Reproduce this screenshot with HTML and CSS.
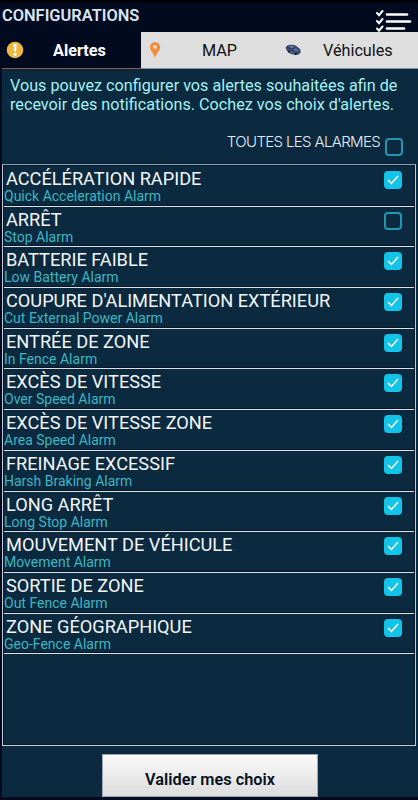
FILE: index.html
```
<!DOCTYPE html>
<html lang="fr">
<head>
    <meta charset="UTF-8">
    <meta name="viewport" content="width=device-width, initial-scale=1.0">
    <title>Configurations</title>
    <link rel="stylesheet" href="styles.css">
</head>
<body>
    <header class="topbar">
        <h1>CONFIGURATIONS</h1>
        <svg class="menu-icon" width="38" height="24" viewBox="0 0 38 24" fill="none" stroke="#fff" stroke-linecap="round">
            <path d="M12 6.5h20M12 13.5h23M12 20.5h17" stroke-width="2.7"/>
            <path d="M2 5l2 2.2 3.5-4.2M2 13l2 2.2 3.5-4.2M2 20.5l2 2.2 3.5-4.2" stroke-width="2"/>
        </svg>
    </header>
    <nav class="tabs">
        <a class="tab active">
            <svg width="18" height="18" viewBox="0 0 18 18">
                <circle cx="9" cy="9" r="8.3" fill="#f1b93c"/>
                <path d="M7.5 3h3.2l-.6 7.6H8.1z" fill="#fff"/>
                <circle cx="9.1" cy="13.3" r="1.6" fill="#fff"/>
            </svg>
            <span>Alertes</span>
        </a>
        <a class="tab map">
            <svg width="12" height="16" viewBox="0 0 12 16">
                <path d="M6 0A5.2 5.2 0 0 0 .8 5.2C.8 8.5 4.5 10.5 6 16c1.5-5.5 5.2-7.5 5.2-10.8A5.2 5.2 0 0 0 6 0z" fill="#f68c35"/>
                <circle cx="6" cy="5" r="1.9" fill="#dedede"/>
            </svg>
            <span>MAP</span>
        </a>
        <a class="tab vehicles">
            <svg width="17" height="12" viewBox="0 0 17 12">
                <path d="M.8 3Q2 1 5 .8q4-.3 6 1l4 3.2q1 1.5.6 3.5-1.6 2.5-4.6 2.5L6 10 2 7Q.6 5 .8 3z" fill="#34456b"/>
                <path d="M3 2.3q3-1.3 6.5.2L7 4.3z" fill="#6b7ea5"/>
                <path d="M8 5.5l3-1.3 3 2.3-3 1z" fill="#5f7298"/>
                <path d="M2 5l5 3.5 3.5.5" stroke="#7c89a6" stroke-width=".7" fill="none"/>
                <circle cx="4" cy="7.5" r="1.2" fill="#17213a"/>
                <circle cx="10.5" cy="9.8" r="1.2" fill="#17213a"/>
            </svg>
            <span>Véhicules</span>
        </a>
    </nav>
    <main class="panel">
        <p class="intro">Vous pouvez configurer vos alertes souhaitées afin de<br>recevoir des notifications. Cochez vos choix d'alertes.</p>
        <label class="all">
            <span>TOUTES LES ALARMES</span>
            <input type="checkbox">
        </label>
        <div class="list">
            <label class="row"><span class="name">ACCÉLÉRATION RAPIDE</span><span class="sub">Quick Acceleration Alarm</span><input type="checkbox" checked></label>
            <label class="row"><span class="name">ARRÊT</span><span class="sub">Stop Alarm</span><input type="checkbox"></label>
            <label class="row"><span class="name">BATTERIE FAIBLE</span><span class="sub">Low Battery Alarm</span><input type="checkbox" checked></label>
            <label class="row"><span class="name">COUPURE D'ALIMENTATION EXTÉRIEUR</span><span class="sub">Cut External Power Alarm</span><input type="checkbox" checked></label>
            <label class="row"><span class="name">ENTRÉE DE ZONE</span><span class="sub">In Fence Alarm</span><input type="checkbox" checked></label>
            <label class="row"><span class="name">EXCÈS DE VITESSE</span><span class="sub">Over Speed Alarm</span><input type="checkbox" checked></label>
            <label class="row"><span class="name">EXCÈS DE VITESSE ZONE</span><span class="sub">Area Speed Alarm</span><input type="checkbox" checked></label>
            <label class="row"><span class="name">FREINAGE EXCESSIF</span><span class="sub">Harsh Braking Alarm</span><input type="checkbox" checked></label>
            <label class="row"><span class="name">LONG ARRÊT</span><span class="sub">Long Stop Alarm</span><input type="checkbox" checked></label>
            <label class="row"><span class="name">MOUVEMENT DE VÉHICULE</span><span class="sub">Movement Alarm</span><input type="checkbox" checked></label>
            <label class="row"><span class="name">SORTIE DE ZONE</span><span class="sub">Out Fence Alarm</span><input type="checkbox" checked></label>
            <label class="row"><span class="name">ZONE GÉOGRAPHIQUE</span><span class="sub">Geo-Fence Alarm</span><input type="checkbox" checked></label>
        </div>
        <button class="submit">Valider mes choix</button>
    </main>
</body>
</html>
```
FILE: styles.css
```
* {
    box-sizing: border-box;
}
body {
    margin: 0;
    height: 800px;
    background-color: #020a20;
    border-top: 2px solid #000;
    font-family: Roboto, sans-serif;
    overflow: hidden;
}
.topbar {
    display: flex;
    justify-content: space-between;
    height: 30px;
    padding: 3px 5px 0 2px;
}
h1 {
    margin: 0;
    color: #dbe4f2;
    font-size: 16.4px;
    font-weight: 600;
    line-height: 21px;
}
.menu-icon {
    margin-top: 3px;
}
.tabs {
    display: grid;
    grid-template-columns: 139px 139px 1fr;
    height: 37px;
    margin-left: 2px;
}
.tab {
    display: flex;
    align-items: center;
    background-color: #dedede;
    border-bottom: 1px solid #8b93a5;
    color: #111;
    font-size: 16.2px;
}
.tab.active {
    padding-left: 4px;
    background-color: #020a20;
    border-bottom-color: #8a5c50;
    color: #fff;
    font-weight: 700;
}
.active span {
    margin-left: 29px;
    padding-top: 1px;
}
.map {
    padding-left: 8px;
}
.map span {
    margin-left: 41px;
    padding-top: 1px;
}
.vehicles {
    padding-left: 5px;
}
.vehicles span {
    margin-left: 21px;
    padding-top: 1px;
}
.panel {
    display: flex;
    flex-direction: column;
    height: 728px;
    margin-left: 2px;
    background-color: #0b2a40;
}
.intro {
    margin: 0;
    padding: 7px 0 0 8px;
    color: #a5f0f3;
    font-size: 16.2px;
    line-height: 19px;
    white-space: nowrap;
}
.all {
    display: flex;
    justify-content: flex-end;
    height: 50px;
    padding: 16px 15px 0 0;
    color: #e8eef5;
    font-family: Inter, sans-serif;
    font-size: 15px;
    font-weight: 300;
    line-height: 24px;
    letter-spacing: -0.65px;
}
.all input {
    margin: 8px 0 0 5px;
}
input {
    appearance: none;
    width: 18px;
    height: 18px;
    margin: 0;
    border: 2px solid #2196b2;
    border-radius: 4px;
}
input:checked {
    border-color: #12c4e8;
    background: #12c4e8 url("data:image/svg+xml,%3Csvg xmlns='http://www.w3.org/2000/svg' viewBox='0 0 14 14'%3E%3Cpath d='M2 7l3.5 3.5L12 3' fill='none' stroke='white' stroke-width='1.5'/%3E%3C/svg%3E") center / 14px no-repeat;
}
.list {
    height: 582px;
    margin-right: 2px;
    border: 1px solid #c5cbd5;
    border-top: 2px solid #929db5;
    outline: 1px solid #071b2b;
    outline-offset: -2px;
}
.row {
    display: grid;
    grid-template-columns: 1fr 18px;
    grid-template-rows: 21px 14px;
    height: 40.7px;
    padding: 2px 13px 0 1px;
    border-bottom: 1px solid #dce0e4;
    box-shadow: inset 0 -1px #071827;
}
.row input {
    grid-column: 2;
    grid-row: 1 / 3;
    margin-top: 3px;
}
.name {
    padding-left: 2px;
    color: #f4f6f8;
    font-size: 18.2px;
    line-height: 22px;
}
.sub {
    grid-row: 2;
    color: #3fb5c0;
    font-size: 14px;
    line-height: 15px;
}
.submit {
    width: 216px;
    height: 43px;
    margin: 8px 0 0 100px;
    padding: 7px 0 0;
    border: 1px solid #9da8b2;
    background: linear-gradient(#fafafa, #dcdcdc);
    color: #071020;
    font-family: inherit;
    font-size: 16.3px;
    font-weight: 600;
}
```
